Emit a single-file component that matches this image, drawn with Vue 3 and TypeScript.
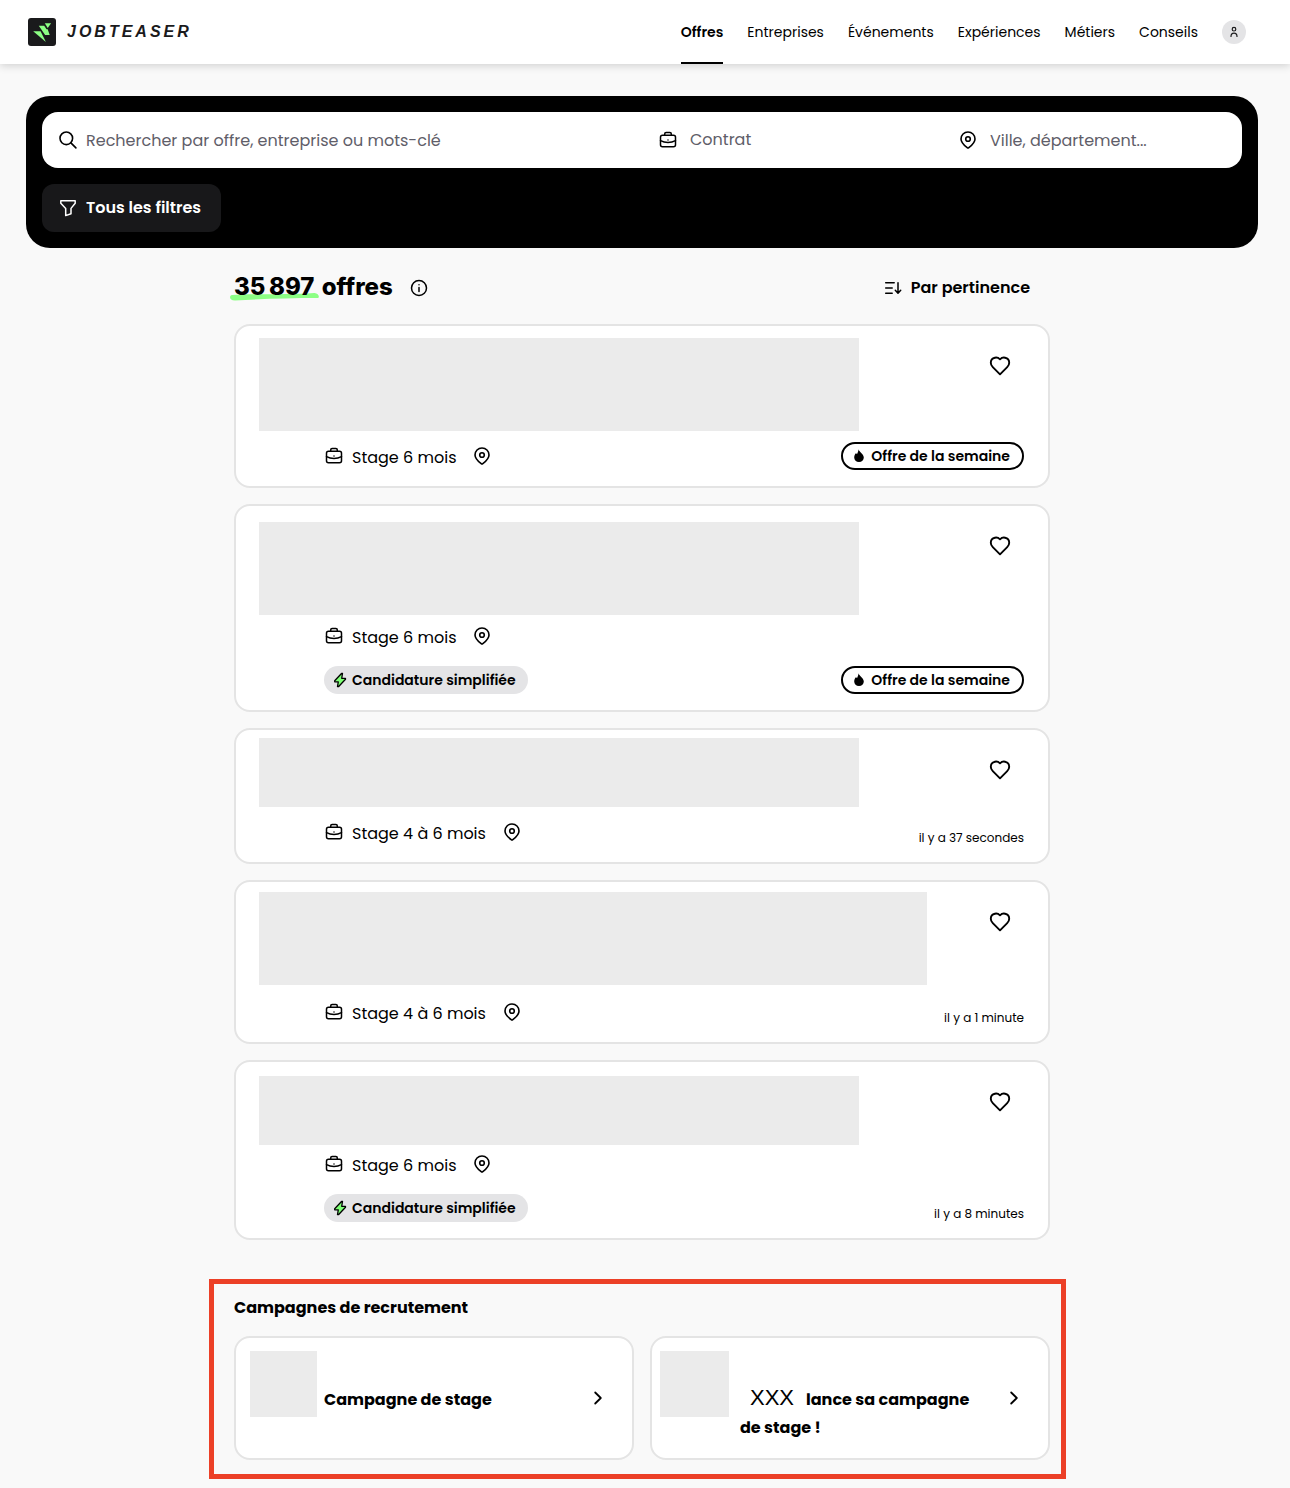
<script setup lang="ts">
import { ref } from 'vue'

interface Offer {
  id: number
  contract: string
  lines: 'tall' | 'short'
  inset: number
  wide?: boolean
  easyApply?: boolean
  weekly?: boolean
  posted?: string
}

const navItems: string[] = ['Offres', 'Entreprises', 'Événements', 'Expériences', 'Métiers', 'Conseils']
const activeItem = ref('Offres')

const query = ref('')
const contract = ref('')
const place = ref('')

const offers: Offer[] = [
  { id: 1, contract: 'Stage 6 mois', lines: 'tall', inset: 12, weekly: true },
  { id: 2, contract: 'Stage 6 mois', lines: 'tall', inset: 16, easyApply: true, weekly: true },
  { id: 3, contract: 'Stage 4 à 6 mois', lines: 'short', inset: 8, posted: 'il y a 37 secondes' },
  { id: 4, contract: 'Stage 4 à 6 mois', lines: 'tall', inset: 10, wide: true, posted: 'il y a 1 minute' },
  { id: 5, contract: 'Stage 6 mois', lines: 'short', inset: 14, easyApply: true, posted: 'il y a 8 minutes' },
]
</script>

<template>
  <div class="page">
    <svg class="sprite" aria-hidden="true">
      <symbol id="i-case" viewBox="0 0 20 20">
        <g fill="none" stroke="currentColor" stroke-width="1.5" stroke-linecap="round" stroke-linejoin="round">
          <rect x="2.500" y="5.200" width="15" height="11.600" rx="2" />
          <path d="M6.700 5.200V3.900c0-.8.600-1.400 1.400-1.400h3.800c.8 0 1.400.6 1.400 1.400v1.300M2.500 10.700c2.200 1.200 4.700 1.900 7.500 1.900s5.300-.7 7.500-1.900" />
          <path d="M10 10v.01" />
        </g>
      </symbol>
      <symbol id="i-pin" viewBox="0 0 20 20">
        <g fill="none" stroke="currentColor" stroke-width="1.6" stroke-linejoin="round">
          <path d="M17 8.900c0 3.800-4.700 7.600-6.200 8.800-.5.4-1.100.4-1.600 0C7.700 16.500 3 12.700 3 8.900 3 4.900 6.100 2 10 2s7 2.900 7 6.900z" />
          <circle cx="10" cy="9" r="2.300" />
        </g>
      </symbol>
      <symbol id="i-heart" viewBox="0 0 24 24">
        <path d="M12 5.300C10.600 3.900 8.700 3.300 6.900 3.700 4.500 4.200 2.800 6.200 2.800 8.700c0 1.700.8 3.200 2 4.400L12 20.300l7.200-7.200c1.200-1.200 2-2.700 2-4.400 0-2.500-1.700-4.500-4.100-5-1.800-.4-3.700.2-5.100 1.600z" fill="none" stroke="currentColor" stroke-width="1.900" stroke-linejoin="round" />
      </symbol>
      <symbol id="i-chevron" viewBox="0 0 20 20">
        <path d="M7.200 4.500 12.800 10l-5.600 5.500" fill="none" stroke="currentColor" stroke-width="1.800" stroke-linecap="round" stroke-linejoin="round" />
      </symbol>
    </svg>

    <header class="topbar">
      <a class="brand" href="#" aria-label="JobTeaser">
        <svg class="brand-mark" viewBox="0 0 28 28" aria-hidden="true">
          <rect width="28" height="28" rx="3" fill="#1a1a1c" />
          <path d="M16.800 5.300h6.300l-3.400 4.600z" fill="#8cff84" />
          <path d="M10.800 7.700h5.400l2.300 3.500h1.200l2 5.800h-4.600z" fill="#8cff84" />
          <path d="M5.200 13.300h7.400l5.300 10.600z" fill="#8cff84" />
        </svg>
        <span class="brand-name">JOBTEASER</span>
      </a>
      <nav class="nav" aria-label="Navigation principale">
        <a
          v-for="item in navItems"
          :key="item"
          href="#"
          class="nav-link"
          :class="{ active: item === activeItem }"
          @click.prevent="activeItem = item"
        >{{ item }}</a>
        <button class="avatar" type="button" aria-label="Mon compte">
          <svg viewBox="0 0 12 12" width="12" height="12" fill="none" stroke="#1a1a1c" stroke-width="1.200" stroke-linecap="round">
            <circle cx="6" cy="3.200" r="1.800" />
            <path d="M3 10.500c0-2.100 1.100-3.300 3-3.300s3 1.200 3 3.300" />
          </svg>
        </button>
      </nav>
    </header>

    <main class="main">
      <form class="search" role="search" @submit.prevent>
        <div class="fields">
          <div class="field">
            <label for="query" aria-label="Recherche">
              <svg class="icon" viewBox="0 0 20 20" fill="none" stroke="currentColor" stroke-width="1.600" stroke-linecap="round">
                <circle cx="8.300" cy="8.300" r="6.300" />
                <path d="m12.900 12.900 5 5" />
              </svg>
            </label>
            <input id="query" v-model="query" type="text" placeholder="Rechercher par offre, entreprise ou mots-clé" />
          </div>
          <div class="field spaced">
            <label for="contract" aria-label="Contrat"><svg class="icon"><use href="#i-case" /></svg></label>
            <select id="contract" v-model="contract">
              <option value="">Contrat</option>
              <option value="stage">Stage</option>
            </select>
          </div>
          <div class="field spaced">
            <label for="place" aria-label="Lieu"><svg class="icon"><use href="#i-pin" /></svg></label>
            <input id="place" v-model="place" type="text" placeholder="Ville, département..." />
          </div>
        </div>
        <button class="filters" type="button">
          <svg class="icon" viewBox="0 0 20 20" fill="none" stroke="currentColor" stroke-width="1.500" stroke-linejoin="round">
            <path d="M2.800 2.800h14.400v2.400l-4.200 5.200v5.400L7.700 17.600v-7.200L2.800 5.200z" />
          </svg>
          Tous les filtres
        </button>
      </form>

      <div class="column">
        <div class="list-head">
          <h1 class="title">
            <span class="count">35&#8239;897
              <svg class="swash" viewBox="0 0 90 8" preserveAspectRatio="none" aria-hidden="true">
                <path d="M2 2C20 .5 60 2 84 0c4-.3 7 5 3 5C60 5 30 6 5 7.500-1 7.500-1 2.500 2 2z" fill="#8cff84" />
              </svg>
            </span>
            offres
          </h1>
          <button class="ghost info" type="button" aria-label="Informations">
            <svg class="icon" viewBox="0 0 20 20" fill="none" stroke="currentColor" stroke-width="1.500" stroke-linecap="round">
              <circle cx="10" cy="10" r="7.500" />
              <path d="M10 9.500v4M10 6.700v.01" />
            </svg>
          </button>
          <button class="ghost sort" type="button">
            <svg class="icon" viewBox="0 0 20 20" fill="none" stroke="currentColor" stroke-width="1.500" stroke-linecap="round" stroke-linejoin="round">
              <path d="M2.700 4.800h8.500M2.700 10h6.500M2.700 15.300h6.500M15 4.800v10M12.300 12.300l2.700 2.900 2.700-2.900" />
            </svg>
            Par pertinence
          </button>
        </div>

        <ul class="offers">
          <li v-for="offer in offers" :key="offer.id" class="card">
            <div class="card-head" :class="offer.lines">
              <div class="skeleton" :class="{ wide: offer.wide }" :style="{ marginTop: offer.inset + 'px' }"></div>
              <button class="heart" type="button" aria-label="Ajouter aux favoris">
                <svg width="24" height="24"><use href="#i-heart" /></svg>
              </button>
            </div>
            <div class="card-foot">
              <div class="details">
                <div class="meta">
                  <svg class="icon"><use href="#i-case" /></svg>
                  <span class="contract">{{ offer.contract }}</span>
                  <svg class="icon pin"><use href="#i-pin" /></svg>
                </div>
                <span v-if="offer.easyApply" class="tag">
                  <svg width="16" height="16" viewBox="0 0 16 16">
                    <path d="M9.500 1.500 2.700 8.800v1h3.600l-.8 4.700h1.200l6.800-7.200v-1H9.700l.8-4.800z" fill="#7dff74" stroke="#000" stroke-width="1.300" stroke-linejoin="round" />
                  </svg>
                  Candidature simplifiée
                </span>
              </div>
              <span v-if="offer.weekly" class="badge">
                <svg width="16" height="16" viewBox="0 0 16 16">
                  <path d="M7.500 1.200c.4 2.700 5.300 4.300 5.300 8.300 0 2.700-2 4.500-4.800 4.500s-4.800-1.800-4.800-4.500c0-1.900.8-3.200 1.700-4.200l1.200.6C6.600 4.700 7.400 3.200 7.500 1.200z" />
                </svg>
                Offre de la semaine
              </span>
              <time v-else class="posted">{{ offer.posted }}</time>
            </div>
          </li>
        </ul>

        <section class="campaigns" aria-labelledby="campaigns-title">
          <h2 id="campaigns-title">Campagnes de recrutement</h2>
          <div class="campaign-grid">
            <a class="campaign" href="#">
              <span class="thumb"></span>
              <span class="campaign-name">Campagne de stage</span>
              <svg class="icon"><use href="#i-chevron" /></svg>
            </a>
            <a class="campaign sponsor" href="#">
              <span class="thumb"></span>
              <span class="campaign-name"><span class="company">XXX</span><span>lance sa campagne</span> <span>de stage !</span></span>
              <svg class="icon"><use href="#i-chevron" /></svg>
            </a>
          </div>
        </section>
      </div>
    </main>
  </div>
</template>

<style>
body {
  background: #f9f9f9;
}
</style>

<style scoped>
.page,
.page * {
  box-sizing: border-box;
}
.page {
  font-family: Poppins, Inter, 'Liberation Sans', sans-serif;
  font-size: 16px;
  line-height: 24px;
  color: #000;
  padding-bottom: 9px;
}
.sprite {
  display: none;
}
a {
  color: inherit;
  text-decoration: none;
}
button,
input,
select {
  font: inherit;
  color: inherit;
  border: 0;
  padding: 0;
  background: none;
}
button {
  cursor: pointer;
}
.icon {
  display: block;
  width: 20px;
  height: 20px;
  flex: none;
}

.topbar {
  display: flex;
  justify-content: space-between;
  height: 64px;
  padding: 0 44px 0 28px;
  background: #fff;
  box-shadow: 0 2px 8px rgba(0, 0, 0, 0.16);
}
.brand {
  display: flex;
  align-items: center;
  gap: 11px;
}
.brand-mark {
  width: 28px;
  height: 28px;
}
.brand-name {
  font-family: 'Liberation Sans', sans-serif;
  font-size: 16px;
  font-weight: 700;
  font-style: italic;
  letter-spacing: 3px;
  color: #1a1a1c;
}
.nav {
  display: flex;
  align-items: center;
  gap: 24px;
  font-size: 14px;
}
.nav-link {
  height: 64px;
  line-height: 64px;
}
.nav-link.active {
  font-weight: 600;
  border-bottom: 2px solid #000;
}
.avatar {
  display: grid;
  place-items: center;
  width: 24px;
  height: 24px;
  border-radius: 50%;
  background: #e4e4e6;
}

.main {
  padding: 32px 32px 0 26px;
}
.search {
  padding: 16px;
  border-radius: 24px;
  background: #000;
}
.fields {
  display: grid;
  grid-template-columns: 2fr 1fr 1fr;
  height: 56px;
  border-radius: 16px;
  background: #fff;
}
.field {
  display: flex;
  align-items: center;
  gap: 8px;
  padding: 0 16px;
  min-width: 0;
}
.field.spaced {
  gap: 12px;
}
.field input,
.field select {
  flex: 1;
  min-width: 0;
  height: 40px;
  outline: none;
  appearance: none;
  color: #5f5e69;
}
.field input::placeholder {
  color: #5f5e69;
  opacity: 1;
}
.filters {
  display: flex;
  align-items: center;
  gap: 8px;
  height: 48px;
  margin-top: 16px;
  padding: 0 20px 0 16px;
  border-radius: 12px;
  background: #18181a;
  color: #fff;
  font-weight: 600;
}

.column {
  max-width: 816px;
  margin: 0 auto;
}
.list-head {
  display: flex;
  align-items: center;
  height: 40px;
  margin: 20px 0 16px;
}
.title {
  margin: 0;
  padding-bottom: 2px;
  font-family: Inter, 'Liberation Sans', sans-serif;
  font-size: 24px;
  line-height: 32px;
  font-weight: 800;
}
.count {
  position: relative;
  z-index: 0;
  margin-right: 2px;
}
.swash {
  position: absolute;
  left: -4px;
  bottom: 0;
  z-index: -1;
  width: 90px;
  height: 8px;
}
.ghost {
  display: flex;
  align-items: center;
  gap: 8px;
}
.info {
  margin-left: 16px;
}
.sort {
  margin-left: auto;
  padding-right: 20px;
  font-weight: 600;
}

.offers {
  display: grid;
  gap: 16px;
  margin: 0;
  padding: 0;
  list-style: none;
}
.card,
.campaign {
  border: 2px solid #e4e4e4;
  border-radius: 16px;
  background: #fff;
}
.card-head {
  display: flex;
  justify-content: space-between;
  align-items: flex-start;
  padding: 0 28px 0 23px;
}
.card-head.tall {
  min-height: 116px;
}
.card-head.short {
  min-height: 88px;
}
.skeleton {
  flex: 0 1 600px;
  height: 93px;
  background: #ebebeb;
}
.short .skeleton {
  height: 69px;
}
.skeleton.wide {
  flex-basis: 668px;
}
.heart {
  display: grid;
  place-items: center;
  width: 40px;
  height: 40px;
  margin-top: 20px;
}
.card-foot {
  display: flex;
  justify-content: space-between;
  align-items: flex-end;
  padding: 0 24px 16px 88px;
}
.details {
  display: grid;
  gap: 16px;
  justify-items: start;
}
.meta {
  display: flex;
  align-items: center;
  gap: 8px;
  height: 28px;
}
.contract {
  padding-top: 4px;
}
.pin {
  margin-left: 8px;
}
.tag,
.badge {
  display: flex;
  align-items: center;
  gap: 4px;
  height: 28px;
  padding: 0 12px 0 8px;
  border-radius: 14px;
  font-size: 14px;
  font-weight: 600;
}
.tag {
  background: #e4e4e6;
}
.badge {
  border: 2px solid #000;
}
.posted {
  font-size: 12px;
  line-height: 16px;
}

.campaigns {
  margin: 39px -16px 0 -25px;
  padding: 12px 11px 14px 20px;
  border: 5px solid #ec4027;
}
.campaigns h2 {
  margin: 0 0 16px;
  font-size: 16px;
  line-height: 24px;
  font-weight: 700;
}
.campaign-grid {
  display: grid;
  grid-template-columns: 1fr 1fr;
  gap: 16px;
}
.campaign {
  display: flex;
  align-items: center;
  padding: 0 24px 0 14px;
}
.campaign.sponsor {
  padding-left: 8px;
}
.thumb {
  flex: none;
  align-self: flex-start;
  width: 67px;
  height: 66px;
  margin-top: 13px;
  background: #ebebeb;
}
.campaign-name {
  flex: 1;
  align-self: flex-start;
  padding: 48px 24px 16px 7px;
  line-height: 28px;
  font-weight: 700;
}
.sponsor .thumb {
  width: 69px;
}
.sponsor .campaign-name {
  padding-left: 11px;
}
.company {
  display: inline-block;
  margin: 0 12px 0 10px;
  font-family: 'Liberation Sans', sans-serif;
  font-size: 22px;
  line-height: 20px;
  font-weight: 400;
}
</style>
